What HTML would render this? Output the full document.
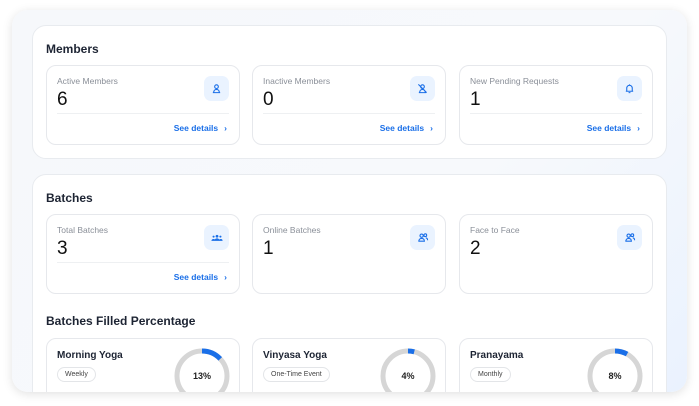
<!DOCTYPE html>
<html><head><meta charset="utf-8"><style>
*{box-sizing:border-box;margin:0;padding:0}
body{width:699px;height:406px;background:#fff;font-family:"Liberation Sans",sans-serif;position:relative;overflow:hidden}
.frame{position:absolute;left:12px;top:10px;width:675px;height:382px;border-radius:16px;background:linear-gradient(135deg,#f6f8fb 0%,#f7f9fc 60%,#eaf2fe 100%);box-shadow:0 2px 10px rgba(0,0,0,.12);overflow:hidden}
.sec{position:absolute;left:20px;width:635px;background:#fff;border:1px solid #e8ebef;border-radius:14px}
.h{position:absolute;left:13px;font-size:12px;font-weight:bold;color:#1d2433}
.card{position:absolute;width:194px;height:80px;border:1px solid #e6e8ec;border-radius:10px;background:#fff}
.lbl{position:absolute;left:10px;top:10px;font-size:8.5px;color:#8a8f98}
.num{position:absolute;left:10px;top:23px;font-size:19px;color:#111}
.ic{position:absolute;right:10px;top:10px;width:25px;height:25px;border-radius:7px;background:#eaf3ff;display:flex;align-items:center;justify-content:center}
.line{position:absolute;left:10px;right:10px;top:47px;border-top:1px solid #eef0f2}
.sd{position:absolute;right:12px;top:57px;font-size:8.5px;font-weight:bold;color:#1a6fe8}
.sd b{margin-left:6px}
.pc{position:absolute;width:194px;height:70px;border:1px solid #e6e8ec;border-radius:10px;background:#fff}
.pt{position:absolute;left:10px;top:11px;font-size:10px;font-weight:bold;color:#1d2433}
.tag{position:absolute;left:10px;top:28px;font-size:7px;color:#444;border:1px solid #e3e5e8;border-radius:8px;padding:3px 7px}
.ring{position:absolute;left:126px;top:8px}
</style></head><body>
<div class="frame">
 <div class="sec" style="top:15px;height:134px">
  <div class="h" style="top:16px">Members</div>
  <div class="card" style="left:13px;top:39px"><div class="lbl">Active Members</div><div class="num">6</div><div class="ic"><svg width="11" height="11" viewBox="0 0 12 12" fill="none" stroke="#1a6fe8" stroke-width="1.2"><circle cx="6" cy="4" r="2"/><path d="M2 10.5h8M3 10c0-2 1.5-3 3-3s3 1 3 3"/></svg></div><div class="line"></div><div class="sd">See details<b>›</b></div></div>
  <div class="card" style="left:219px;top:39px"><div class="lbl">Inactive Members</div><div class="num">0</div><div class="ic"><svg width="11" height="11" viewBox="0 0 12 12" fill="none" stroke="#1a6fe8" stroke-width="1.2"><circle cx="6" cy="4" r="2"/><path d="M2 10.5h8M3 10c0-2 1.5-3 3-3s3 1 3 3M1.5 1.5l9 9"/></svg></div><div class="line"></div><div class="sd">See details<b>›</b></div></div>
  <div class="card" style="left:426px;top:39px"><div class="lbl">New Pending Requests</div><div class="num">1</div><div class="ic"><svg width="11" height="11" viewBox="0 0 12 12" fill="none" stroke="#1a6fe8" stroke-width="1.2"><path d="M3 9V5.5a3 3 0 016 0V9zM2 9h8M5 10.5h2M6 1.5v1"/></svg></div><div class="line"></div><div class="sd">See details<b>›</b></div></div>
 </div>
 <div class="sec" style="top:164px;height:240px">
  <div class="h" style="top:16px">Batches</div>
  <div class="card" style="left:13px;top:39px"><div class="lbl">Total Batches</div><div class="num">3</div><div class="ic"><svg width="12" height="11" viewBox="0 0 14 12" fill="#1a6fe8"><circle cx="7" cy="4.5" r="1.6"/><circle cx="3" cy="5" r="1.2"/><circle cx="11" cy="5" r="1.2"/><path d="M4 10c0-2 1.5-3 3-3s3 1 3 3zM0.5 10c0-1.5 1-2.3 2.5-2.3S5 8.5 5 10zM9 10c0-1.5 1-2.3 2.5-2.3S13.5 8.5 13.5 10z"/></svg></div><div class="line"></div><div class="sd">See details<b>›</b></div></div>
  <div class="card" style="left:219px;top:39px"><div class="lbl">Online Batches</div><div class="num">1</div><div class="ic"><svg width="12" height="11" viewBox="0 0 12 12" fill="none" stroke="#1a6fe8" stroke-width="1.2"><circle cx="4.5" cy="4" r="1.8"/><circle cx="8.5" cy="3.5" r="1.5"/><path d="M1.5 10c0-2 1.3-3 3-3s3 1 3 3zM9 6.5c1.3 0 2 1 2 2.5"/></svg></div></div>
  <div class="card" style="left:426px;top:39px"><div class="lbl">Face to Face</div><div class="num">2</div><div class="ic"><svg width="12" height="11" viewBox="0 0 12 12" fill="none" stroke="#1a6fe8" stroke-width="1.2"><circle cx="4.5" cy="4" r="1.8"/><circle cx="8.5" cy="3.5" r="1.5"/><path d="M1.5 10c0-2 1.3-3 3-3s3 1 3 3zM9 6.5c1.3 0 2 1 2 2.5"/></svg></div></div>
  <div class="h" style="top:139px">Batches Filled Percentage</div>
  <div class="pc" style="left:13px;top:163px"><div class="pt">Morning Yoga</div><div class="tag">Weekly</div>
   <svg class="ring" width="58" height="58" viewBox="0 0 58 58"><circle cx="29" cy="29" r="25" fill="none" stroke="#d6d6d6" stroke-width="5"/><circle cx="29" cy="29" r="25" fill="none" stroke="#1a6fe8" stroke-width="5" stroke-dasharray="20.4 200" transform="rotate(-90 29 29)"/><text x="29" y="32" font-size="9" font-weight="bold" text-anchor="middle" fill="#222" font-family="Liberation Sans">13%</text></svg></div>
  <div class="pc" style="left:219px;top:163px"><div class="pt">Vinyasa Yoga</div><div class="tag">One-Time Event</div>
   <svg class="ring" width="58" height="58" viewBox="0 0 58 58"><circle cx="29" cy="29" r="25" fill="none" stroke="#d6d6d6" stroke-width="5"/><circle cx="29" cy="29" r="25" fill="none" stroke="#1a6fe8" stroke-width="5" stroke-dasharray="6.3 200" transform="rotate(-90 29 29)"/><text x="29" y="32" font-size="9" font-weight="bold" text-anchor="middle" fill="#222" font-family="Liberation Sans">4%</text></svg></div>
  <div class="pc" style="left:426px;top:163px"><div class="pt">Pranayama</div><div class="tag">Monthly</div>
   <svg class="ring" width="58" height="58" viewBox="0 0 58 58"><circle cx="29" cy="29" r="25" fill="none" stroke="#d6d6d6" stroke-width="5"/><circle cx="29" cy="29" r="25" fill="none" stroke="#1a6fe8" stroke-width="5" stroke-dasharray="12.6 200" transform="rotate(-90 29 29)"/><text x="29" y="32" font-size="9" font-weight="bold" text-anchor="middle" fill="#222" font-family="Liberation Sans">8%</text></svg></div>
 </div>
</div>
</body></html>
